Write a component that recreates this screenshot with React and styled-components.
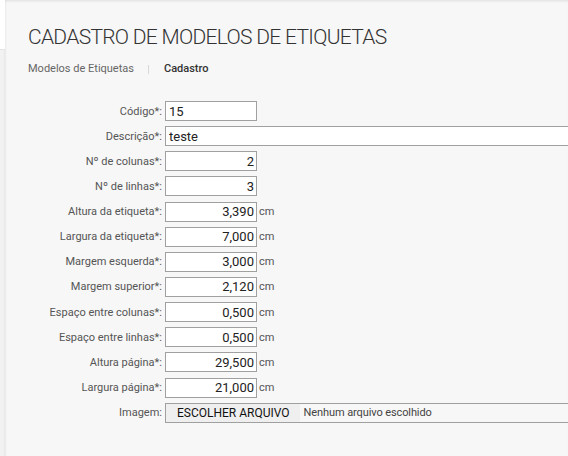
import React from "react";
import styled, { createGlobalStyle } from "styled-components";

const Global = createGlobalStyle`
  html, body { margin: 0; padding: 0; background: #f7f7f7; }
  body { font-family: Roboto, "Liberation Sans", Arial, sans-serif; }
  * { box-sizing: border-box; }
`;

const Shell = styled.div`
  display: flex;
  min-height: 456px;
  width: 568px;
  overflow: hidden;
`;

const SideEdge = styled.div`
  width: 5px;
  flex: none;
  display: flex;
  flex-direction: column;
  background: #f2f2f2;
  box-shadow: inset -1px 0 1px rgba(0, 0, 0, 0.04);
`;

const SideTop = styled.div`
  height: 50px;
  background: #ffffff;
  border-bottom: 1px solid #e4e4e4;
`;

const Main = styled.main`
  flex: 1;
  min-width: 0;
  background: #f7f7f7;
  box-shadow: inset 0 3px 3px -2px rgba(0, 0, 0, 0.1), inset 2px 0 2px -1px rgba(0, 0, 0, 0.05);
  padding-top: 24px;
`;

const Title = styled.h1`
  margin: 0 0 0 23px;
  font-weight: 300;
  font-size: 21px;
  line-height: 26px;
  color: #333;
  letter-spacing: -0.7px;
  white-space: nowrap;
`;

const Crumbs = styled.nav`
  display: flex;
  align-items: center;
  margin: 11px 0 0 23px;
  font-size: 11px;
  line-height: 16px;
`;

const Crumb = styled.span`
  color: ${(p) => (p.$current ? "#333" : "#666")};
  font-weight: ${(p) => (p.$current ? 500 : 400)};
`;

const Sep = styled.span`
  display: inline-block;
  width: 1px;
  height: 9px;
  background: #d8d8d8;
  margin: 0 15px 0 14px;
`;

const Form = styled.form`
  display: grid;
  grid-template-columns: 157px 1fr;
  column-gap: 3px;
  row-gap: 5.15px;
  margin-top: 24px;
`;

const Label = styled.label`
  text-align: right;
  color: #555;
  align-self: center;
  white-space: nowrap;
  font-size: 11px;
`;

const Field = styled.div`
  display: flex;
  align-items: center;
  min-width: 0;
  height: 20px;
`;

const Input = styled.input`
  height: 20px;
  width: ${(p) => (p.$wide ? "420px" : "92px")};
  flex: none;
  border: 1px solid #a0a0a0;
  border-radius: 0;
  background: #fff;
  padding: 0 2px 0 3px;
  font-family: inherit;
  font-size: 13px;
  color: #222;
  text-align: ${(p) => (p.$num ? "right" : "left")};
  outline: none;
`;

const Unit = styled.span`
  margin-left: 2px;
  color: #555;
  font-size: 11px;
`;

const FileBox = styled.div`
  display: flex;
  align-items: center;
  height: 20px;
  width: 420px;
  flex: none;
  border: 1px solid #a0a0a0;
  background: #f7f7f7;
`;

const FileButton = styled.span`
  display: flex;
  align-items: center;
  height: 100%;
  padding: 0 10px 0 11px;
  background: #efefef;
  color: #111;
  font-size: 12px;
  white-space: nowrap;
`;

const FileName = styled.span`
  margin-left: 4px;
  color: #444;
  font-size: 11px;
  letter-spacing: -0.1px;
  white-space: nowrap;
`;

const rows = [
  { label: "Código*:", value: "15" },
  { label: "Descrição*:", value: "teste", wide: true },
  { label: "Nº de colunas*:", value: "2", num: true },
  { label: "Nº de linhas*:", value: "3", num: true },
  { label: "Altura da etiqueta*:", value: "3,390", num: true, unit: "cm" },
  { label: "Largura da etiqueta*:", value: "7,000", num: true, unit: "cm" },
  { label: "Margem esquerda*:", value: "3,000", num: true, unit: "cm" },
  { label: "Margem superior*:", value: "2,120", num: true, unit: "cm" },
  { label: "Espaço entre colunas*:", value: "0,500", num: true, unit: "cm" },
  { label: "Espaço entre linhas*:", value: "0,500", num: true, unit: "cm" },
  { label: "Altura página*:", value: "29,500", num: true, unit: "cm" },
  { label: "Largura página*:", value: "21,000", num: true, unit: "cm" },
];

export default function App() {
  return (
    <>
      <Global />
      <Shell>
        <SideEdge>
          <SideTop />
        </SideEdge>
        <Main>
          <Title>CADASTRO DE MODELOS DE ETIQUETAS</Title>
          <Crumbs>
            <Crumb>Modelos de Etiquetas</Crumb>
            <Sep />
            <Crumb $current>Cadastro</Crumb>
          </Crumbs>
          <Form onSubmit={(e) => e.preventDefault()}>
            {rows.map((r) => (
              <React.Fragment key={r.label}>
                <Label>{r.label}</Label>
                <Field>
                  <Input defaultValue={r.value} $num={r.num} $wide={r.wide} />
                  {r.unit && <Unit>{r.unit}</Unit>}
                </Field>
              </React.Fragment>
            ))}
            <Label>Imagem:</Label>
            <Field>
              <FileBox>
                <FileButton>ESCOLHER ARQUIVO</FileButton>
                <FileName>Nenhum arquivo escolhido</FileName>
              </FileBox>
            </Field>
          </Form>
        </Main>
      </Shell>
    </>
  );
}
